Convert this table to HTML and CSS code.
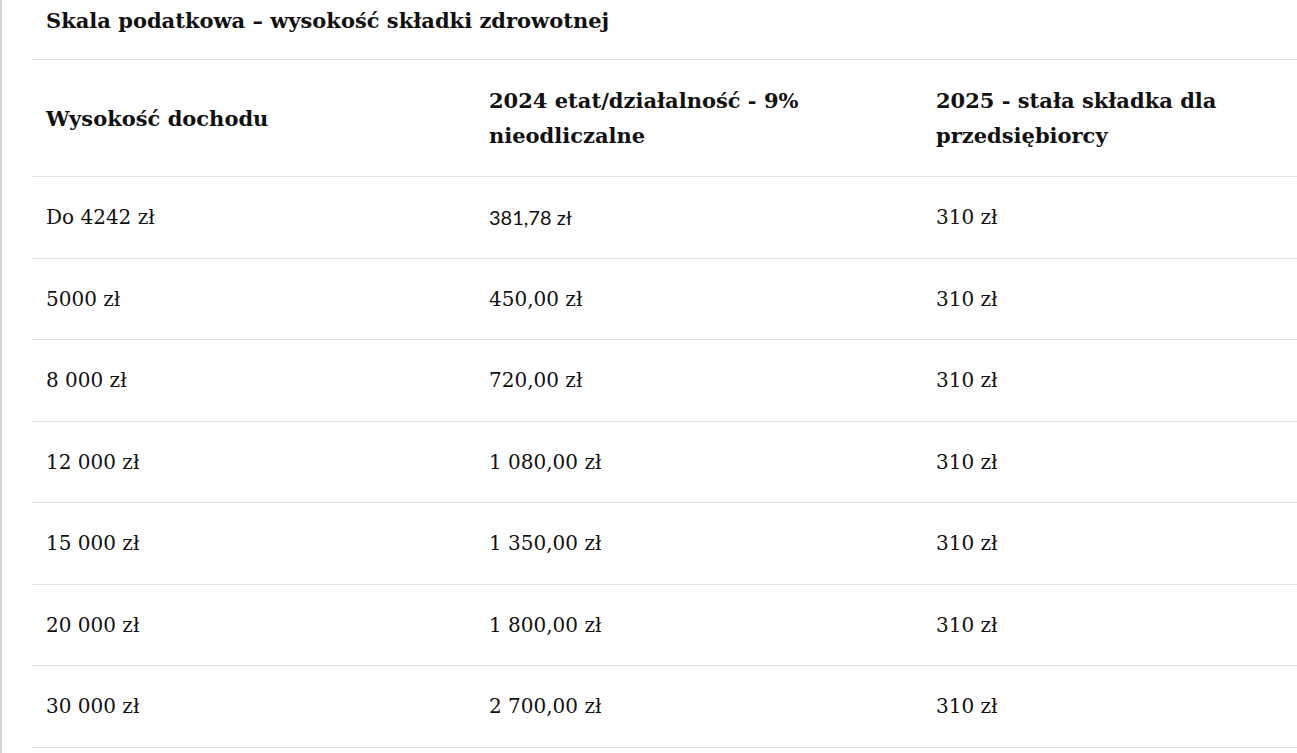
FILE: index.html
```html
<!DOCTYPE html>
<html lang="pl">
<head>
<meta charset="utf-8">
<title>Skala podatkowa – wysokość składki zdrowotnej</title>
<link rel="stylesheet" href="styles.css">
</head>
<body>
<div class="page">
  <table class="tax-table">
    <colgroup>
      <col class="c1">
      <col class="c2">
      <col class="c3">
    </colgroup>
    <thead>
      <tr class="title-row">
        <th colspan="3" class="title">Skala podatkowa – wysokość składki zdrowotnej</th>
      </tr>
      <tr class="head-row">
        <th>Wysokość dochodu</th>
        <th>2024 etat/działalność - 9% nieodliczalne</th>
        <th>2025 - stała składka dla przedsiębiorcy</th>
      </tr>
    </thead>
    <tbody>
      <tr><td>Do 4242 zł</td><td class="sans">381,78 zł</td><td>310 zł</td></tr>
      <tr><td>5000 zł</td><td>450,00 zł</td><td>310 zł</td></tr>
      <tr><td>8 000 zł</td><td>720,00 zł</td><td>310 zł</td></tr>
      <tr><td>12 000 zł</td><td>1 080,00 zł</td><td>310 zł</td></tr>
      <tr><td>15 000 zł</td><td>1 350,00 zł</td><td>310 zł</td></tr>
      <tr><td>20 000 zł</td><td>1 800,00 zł</td><td>310 zł</td></tr>
      <tr><td>30 000 zł</td><td>2 700,00 zł</td><td>310 zł</td></tr>
    </tbody>
  </table>
</div>
</body>
</html>
```

FILE: styles.css
```css
html, body {
  margin: 0;
  padding: 0;
  background: #ffffff;
}

body {
  font-family: Georgia, "DejaVu Serif", serif;
  color: #111111;
}

.page {
  border-left: 2px solid #d2d2d2;
  padding-left: 30px;
  min-height: 753px;
  box-sizing: border-box;
}

.tax-table {
  width: 1265px;
  border-collapse: collapse;
  table-layout: fixed;
}

.c1 { width: 443px; }
.c2 { width: 447px; }
.c3 { width: 375px; }

.tax-table th,
.tax-table td {
  text-align: left;
  vertical-align: middle;
  padding: 23px 14px;
  border-bottom: 1px solid #dde3e9;
  font-size: 20px;
  line-height: 34.57px;
}

.tax-table th {
  font-weight: bold;
  font-size: 21px;
  line-height: 35px;
  padding: 23px 14px;
  color: #111111;
}

.tax-table td {
  font-weight: normal;
  color: #111111;
}

.tax-table .title {
  font-size: 21px;
  padding: 3px 14px 21px;
  line-height: 35px;
}

.tax-table .sans {
  font-family: Lato, "Noto Sans", sans-serif;
  font-size: 20px;
}
```
